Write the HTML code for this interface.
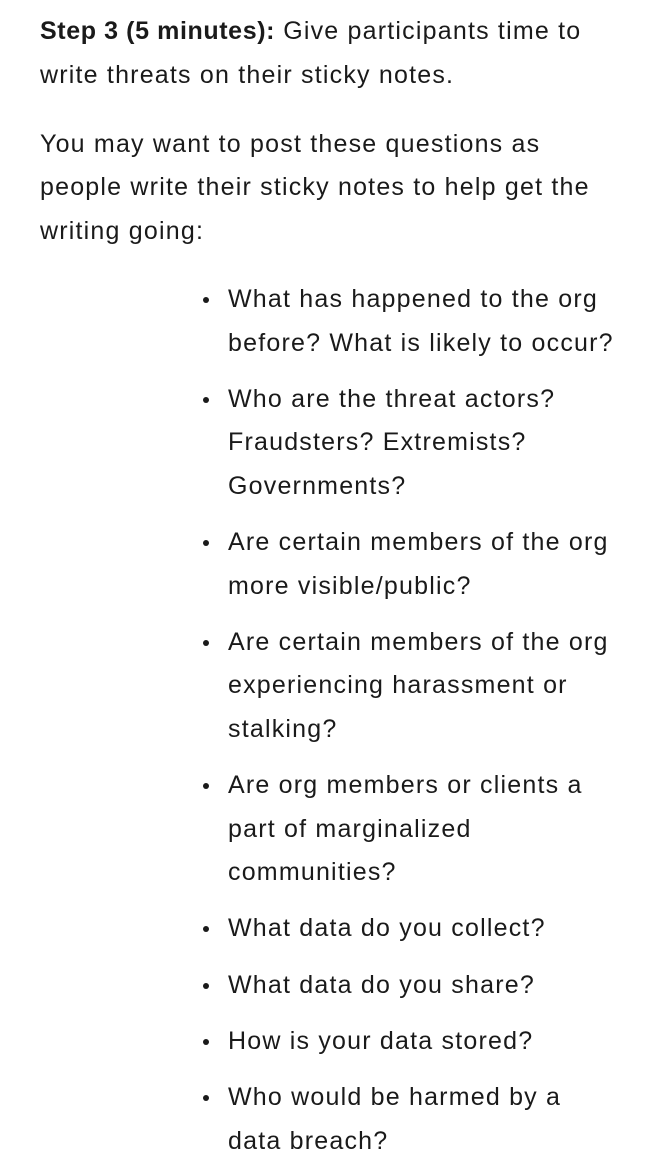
<!DOCTYPE html>
<html><head><meta charset="utf-8"><style>
html,body{margin:0;padding:0;background:#fff;}
body{width:668px;height:1176px;overflow:hidden;font-family:"Liberation Sans",sans-serif;color:#1a1a1a;font-size:25px;letter-spacing:1.2px;}
.wrap{position:absolute;left:40px;top:10px;}
.l{height:43.5px;line-height:43.5px;white-space:nowrap;}
ul{margin:0;padding:0;list-style:none;position:absolute;left:228px;top:278px;}
li{margin:0 0 12.8px 0;position:relative;}
li:before{content:"";position:absolute;left:-25px;top:19px;width:6px;height:6px;border-radius:50%;background:#1a1a1a;}
b{font-weight:bold;letter-spacing:0.6px;}
</style></head><body>
<div class="wrap">
<div class="l"><b>Step 3 (5 minutes):</b> Give participants time to</div>
<div class="l">write threats on their sticky notes.</div>
<div style="height:25.5px"></div>
<div class="l">You may want to post these questions as</div>
<div class="l">people write their sticky notes to help get the</div>
<div class="l">writing going:</div>
</div>
<ul>
<li><div class="l">What has happened to the org</div><div class="l">before? What is likely to occur?</div></li>
<li><div class="l">Who are the threat actors?</div><div class="l">Fraudsters? Extremists?</div><div class="l">Governments?</div></li>
<li><div class="l">Are certain members of the org</div><div class="l">more visible/public?</div></li>
<li><div class="l">Are certain members of the org</div><div class="l">experiencing harassment or</div><div class="l">stalking?</div></li>
<li><div class="l">Are org members or clients a</div><div class="l">part of marginalized</div><div class="l">communities?</div></li>
<li><div class="l">What data do you collect?</div></li>
<li><div class="l">What data do you share?</div></li>
<li><div class="l">How is your data stored?</div></li>
<li><div class="l">Who would be harmed by a</div><div class="l">data breach?</div></li>
</ul>
</body></html>
